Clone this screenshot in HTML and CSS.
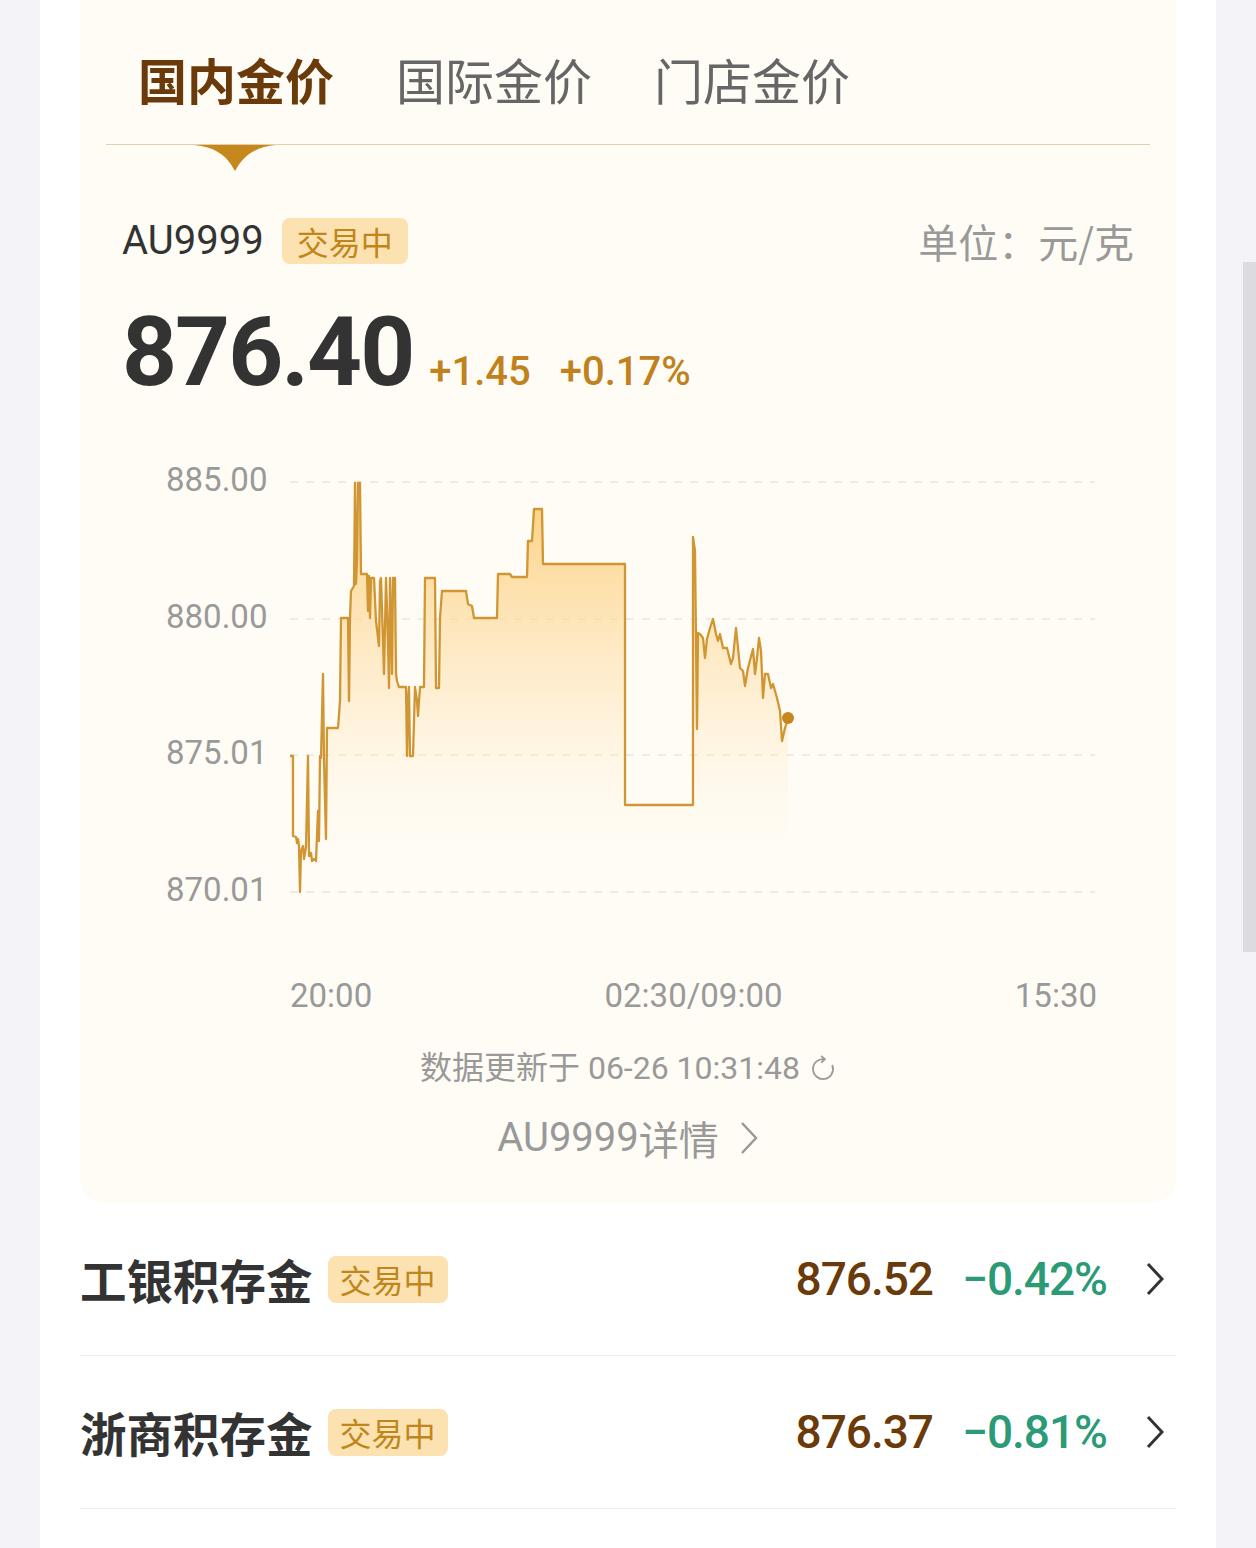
FILE: index.html
```html
<!DOCTYPE html>
<html lang="zh-CN">
  <head>
    <meta charset="UTF-8" />
    <meta name="viewport" content="width=device-width, initial-scale=1.0" />
    <title>金价行情</title>
    <link rel="stylesheet" href="styles.css">
  </head>
  <body>
    <div class="panel">
      <div class="card">
        <div class="tabs">
          <div class="tab active">
            国内金价
            <svg class="tab-pointer" width="82" height="26" viewBox="0 0 82 26">
              <path d="M0 0 H82 C62 2 50 9 41 26 C32 9 20 2 0 0 Z" fill="#c6871c" />
            </svg>
          </div>
          <div class="tab">国际金价</div>
          <div class="tab">门店金价</div>
        </div>

        <div class="quote">
          <div class="quote-head">
            <div class="symbol">
              <span class="num">AU9999</span>
              <span class="badge">交易中</span>
            </div>
            <div class="unit">单位：元/克</div>
          </div>

          <div class="price-line num">
            <span class="price">876.40</span>
            <span class="change">+1.45</span>
            <span class="change pct">+0.17%</span>
          </div>

          <div class="chart">
            <div class="y-axis num">
              <span>885.00</span>
              <span>880.00</span>
              <span>875.01</span>
              <span>870.01</span>
            </div>
            <svg class="plot" width="807" height="450" viewBox="290 459 807 450">
              <defs>
                <linearGradient id="area" gradientUnits="userSpaceOnUse" x1="0" y1="482" x2="0" y2="860">
                  <stop offset="0" stop-color="#fcc96f" stop-opacity="0.9" />
                  <stop offset="0.55" stop-color="#fde3b4" stop-opacity="0.55" />
                  <stop offset="1" stop-color="#fff6e6" stop-opacity="0" />
                </linearGradient>
              </defs>
              <g class="grid">
                <line x1="290" y1="481" x2="1095" y2="481" />
                <line x1="290" y1="618" x2="1095" y2="618" />
                <line x1="290" y1="754" x2="1095" y2="754" />
                <line x1="290" y1="891" x2="1095" y2="891" />
              </g>
              <path id="area-path" fill="url(#area)" />
              <path id="line-path" class="line" />
              <circle cx="788" cy="717" r="6" fill="#c6871c" />
            </svg>
          </div>

          <div class="x-axis num">
            <span>20:00</span>
            <span>02:30/09:00</span>
            <span>15:30</span>
          </div>

          <div class="updated num">
            数据更新于 06-26 10:31:48
            <svg class="refresh" width="26" height="26" viewBox="0 0 26 26">
              <path d="M14.7 4.2 A10 10 0 1 0 22.4 10.6" />
              <path d="M11.6 1.4 L14.9 4.2 L11.8 7.2" />
            </svg>
          </div>

          <a class="detail" href="#">
            <span class="num">AU9999</span>详情
            <svg width="20" height="36" viewBox="0 0 20 36">
              <path d="M3 3 L17 18 L3 33" />
            </svg>
          </a>
        </div>
      </div>

      <ul class="products">
        <li class="product">
          <span class="name">工银积存金</span>
          <span class="badge">交易中</span>
          <span class="spacer"></span>
          <span class="value num">876.52</span>
          <span class="rate num">−0.42%</span>
          <svg class="arrow" width="18" height="34" viewBox="0 0 18 34">
            <path d="M2 2 L16 17 L2 32" />
          </svg>
        </li>
        <li class="product">
          <span class="name">浙商积存金</span>
          <span class="badge">交易中</span>
          <span class="spacer"></span>
          <span class="value num">876.37</span>
          <span class="rate num">−0.81%</span>
          <svg class="arrow" width="18" height="34" viewBox="0 0 18 34">
            <path d="M2 2 L16 17 L2 32" />
          </svg>
        </li>
      </ul>
    </div>
    <div class="scrollbar"></div>

    <script>
      // intraday AU9999 ticks, in chart pixel coordinates
      const ticks = [
        [290, 755], [293, 755], [293, 835], [296, 836], [297, 842], [298, 838],
        [299, 845], [300, 891], [301, 850], [303, 845], [304, 858], [306, 846],
        [308, 755], [309, 855], [311, 852], [312, 860], [314, 858], [316, 860],
        [318, 810], [319, 840], [320, 755], [321, 757], [323, 673], [324, 760],
        [326, 838], [327, 727], [338, 727], [340, 700], [341, 617], [348, 617],
        [349, 700], [350, 617], [351, 590], [354, 585], [355, 482], [356, 583],
        [357, 560], [358, 482], [360, 482], [361, 573], [367, 573], [368, 610],
        [369, 575], [370, 617], [371, 577], [374, 577], [376, 620], [379, 645],
        [380, 580], [381, 577], [383, 640], [384, 673], [386, 577], [388, 640],
        [389, 687], [390, 577], [392, 673], [393, 577], [395, 577], [396, 673],
        [397, 680], [399, 686], [406, 686], [407, 755], [408, 700], [409, 686],
        [410, 755], [413, 755], [415, 686], [417, 700], [418, 715], [419, 700],
        [420, 686], [424, 686], [425, 577], [435, 577], [436, 687], [439, 687],
        [440, 617], [442, 590], [466, 590], [468, 603], [472, 605], [474, 617],
        [497, 617], [498, 573], [510, 573], [512, 576], [527, 576], [528, 540],
        [532, 540], [534, 508], [542, 508], [543, 563], [625, 563], [625, 804],
        [693, 804], [693, 536], [695, 550], [697, 728], [698, 632], [700, 633],
        [703, 637], [705, 657], [707, 638], [710, 627], [713, 618], [716, 633],
        [718, 640], [720, 633], [723, 647], [727, 647], [731, 663], [733, 657],
        [736, 627], [738, 647], [740, 667], [743, 670], [745, 685], [748, 667],
        [753, 648], [755, 673], [757, 657], [759, 637], [761, 650], [763, 697],
        [765, 673], [768, 673], [771, 687], [773, 683], [777, 697], [780, 710],
        [782, 740], [785, 727], [788, 717],
      ];

      const line = "M" + ticks.map((p) => p.join(" ")).join(" L");
      document.querySelector("#line-path").setAttribute("d", line);
      document
        .querySelector("#area-path")
        .setAttribute("d", line + " L788 891 L290 891 Z");
    </script>
  </body>
</html>
```

FILE: styles.css
```css
body {
  margin: 0;
  background-color: #f3f3f8;
  font-family: "Noto Sans CJK SC", sans-serif;
  color: #333;
}
.num {
  font-family: Roboto, "Noto Sans CJK SC", sans-serif;
}
.panel {
  margin: 0 40px;
  padding: 0 40px;
  min-height: 1548px;
  background-color: #fff;
}
.card {
  background-color: #fffcf5;
  border-radius: 0 0 24px 24px;
  padding-bottom: 41px;
}

/* tabs */
.tabs {
  display: flex;
  gap: 62px;
  margin: 0 26px;
  padding: 49px 0 35px 32px;
  border-bottom: 1px solid #e2d0a8;
}
.tab {
  position: relative;
  font-size: 49px;
  line-height: 60px;
  color: #666;
}
.tab.active {
  color: #6b3a0a;
  font-weight: 700;
}
.tab-pointer {
  position: absolute;
  left: 56px;
  top: 96px;
}

/* quote */
.quote {
  padding: 0 42px;
}
.quote-head {
  display: flex;
  justify-content: space-between;
  align-items: center;
  margin-top: 73px;
  height: 46px;
}
.symbol {
  display: flex;
  align-items: center;
  font-size: 40px;
  line-height: 46px;
  color: #333;
}
.badge {
  display: inline-block;
  height: 46px;
  padding: 0 15px;
  margin-left: 18px;
  border-radius: 8px;
  background-color: #fce2b0;
  color: #c0861c;
  font-size: 32px;
  line-height: 46px;
  font-weight: 400;
}
.unit {
  font-size: 40px;
  line-height: 46px;
  color: #999;
}
.price-line {
  display: flex;
  align-items: baseline;
  margin-top: 40px;
  line-height: 96px;
}
.price {
  font-size: 96px;
  font-weight: 700;
  letter-spacing: -2px;
  color: #333;
}
.change {
  margin-left: 16px;
  font-size: 40px;
  font-weight: 500;
  color: #c0821e;
}
.change.pct {
  margin-left: 29px;
}

/* chart */
.chart {
  display: flex;
  margin: 40px 0 0 44px;
  height: 450px;
}
.y-axis {
  display: flex;
  flex-direction: column;
  justify-content: space-between;
  width: 124px;
  font-size: 33px;
  line-height: 40px;
  color: #999;
}
.plot {
  display: block;
}
.grid line {
  stroke: #ede5d4;
  stroke-width: 1.5;
  stroke-dasharray: 8 8;
}
.line {
  fill: none;
  stroke: #d09633;
  stroke-width: 2.3;
  stroke-linejoin: round;
}
.x-axis {
  display: flex;
  justify-content: space-between;
  width: 807px;
  margin: 66px 0 0 168px;
  font-size: 33px;
  line-height: 40px;
  color: #999;
}
.updated {
  display: flex;
  justify-content: center;
  align-items: center;
  margin-top: 32px;
  font-size: 32px;
  line-height: 40px;
  color: #999;
}
.refresh {
  margin-left: 10px;
}
.refresh path {
  fill: none;
  stroke: #999;
  stroke-width: 1.8;
  stroke-linecap: round;
  stroke-linejoin: round;
}
.detail {
  display: flex;
  justify-content: center;
  align-items: center;
  margin-top: 26px;
  font-size: 40px;
  line-height: 48px;
  color: #999;
  text-decoration: none;
}
.detail svg {
  margin-left: 20px;
}
.detail path {
  fill: none;
  stroke: #999;
  stroke-width: 2.5;
}

/* product list */
.products {
  list-style: none;
  margin: 0;
  padding: 0;
}
.product {
  display: flex;
  align-items: center;
  box-sizing: border-box;
  height: 153px;
  padding-right: 12px;
  border-bottom: 1px solid #eee;
}
.product .name {
  font-size: 46.5px;
  font-weight: 700;
  line-height: 1;
  color: #333;
}
.product .badge {
  height: 47px;
  line-height: 47px;
  padding: 0 12px;
  margin-left: 15px;
}
.spacer {
  flex: 1;
}
.value {
  font-size: 46px;
  font-weight: 500;
  letter-spacing: -1px;
  color: #6b3a0a;
}
.rate {
  margin-left: 29px;
  font-size: 46px;
  font-weight: 500;
  letter-spacing: -1px;
  color: #2a9a77;
}
.arrow {
  margin-left: 39px;
}
.arrow path {
  fill: none;
  stroke: #333;
  stroke-width: 3;
}

.scrollbar {
  position: fixed;
  right: 0;
  top: 262px;
  width: 13px;
  height: 690px;
  background-color: #dcdce0;
}
```
